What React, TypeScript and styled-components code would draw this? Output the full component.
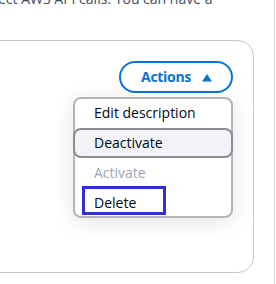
import React from "react";
import styled, { createGlobalStyle } from "styled-components";

const GlobalStyle = createGlobalStyle`
  html, body {
    margin: 0;
    padding: 0;
    background: #ffffff;
    overflow: hidden;
  }
  body {
    font-family: "Open Sans", "Helvetica Neue", Roboto, Arial, sans-serif;
    font-size: 14px;
    line-height: 20px;
    color: #000716;
  }
`;

const Page = styled.div`
  width: 274px;
  height: 284px;
  border-right: 1px solid #d9dce0;
  overflow: hidden;
  position: relative;
`;

const Intro = styled.p`
  margin: -11px 0 0 -2px;
  color: #414d5c;
  white-space: nowrap;
`;

const Card = styled.section`
  box-sizing: border-box;
  margin: 31px 0 0 -24px;
  width: 278px;
  height: 233px;
  border: 1px solid #c6c6cd;
  border-radius: 16px;
  padding: 20px 20px;
`;

const Header = styled.div`
  display: flex;
  justify-content: flex-end;
  position: relative;
`;

const ActionsButton = styled.button`
  display: inline-flex;
  align-items: center;
  gap: 8px;
  box-sizing: border-box;
  height: 32px;
  padding: 4px 16px 4px 20px;
  border: 2px solid #0972d3;
  border-radius: 20px;
  background: #ffffff;
  color: #0972d3;
  font-family: inherit;
  font-size: 14px;
  font-weight: 700;
  line-height: 20px;
  letter-spacing: -0.3px;
`;

const Caret = styled.svg`
  display: block;
  width: 16px;
  height: 16px;
`;

const Menu = styled.ul`
  position: absolute;
  top: 36px;
  right: 0;
  box-sizing: border-box;
  width: 160px;
  height: 121px;
  margin: 0;
  padding: 0;
  list-style: none;
  background: #ffffff;
  border: 2px solid #b4b4bb;
  border-radius: 8px;
  box-shadow: 0 4px 20px 1px rgba(0, 7, 22, 0.1);
`;

const List = styled.div`
  margin-top: -1px;
`;

const Item = styled.li<{ $highlighted?: boolean; $disabled?: boolean }>`
  position: relative;
  box-sizing: border-box;
  height: 30px;
  display: flex;
  align-items: center;
  padding-left: 19px;
  margin: ${(p) => (p.$highlighted ? "0 -2px" : "0")};
  color: ${(p) => (p.$disabled ? "#9ba7b6" : "#000716")};
  background: ${(p) => (p.$highlighted ? "#f3f3f7" : "transparent")};
  border: ${(p) => (p.$highlighted ? "2px solid #8c8c94" : "none")};
  border-radius: 8px;
  white-space: nowrap;
`;

const FocusRing = styled.span`
  position: absolute;
  left: 7px;
  top: -2px;
  box-sizing: border-box;
  width: 84px;
  height: 29px;
  border: 3px solid #2f2fd0;
  pointer-events: none;
`;

const items = [
  { label: "Edit description" },
  { label: "Deactivate", highlighted: true },
  { label: "Activate", disabled: true },
  { label: "Delete", focused: true },
];

const App = () => {
  return (
    <>
      <GlobalStyle />
      <Page>
        <Intro>ect AWS API calls. You can have a</Intro>
        <Card>
          <Header>
            <ActionsButton>
              Actions
              <Caret viewBox="0 0 16 16">
                <path d="M3 12.5 L8 5 L13 12.5 Z" fill="#0972d3" />
              </Caret>
            </ActionsButton>
            <Menu>
              <List>
                {items.map((item) => (
                  <Item
                    key={item.label}
                    $highlighted={item.highlighted}
                    $disabled={item.disabled}
                  >
                    {item.focused && <FocusRing />}
                    {item.label}
                  </Item>
                ))}
              </List>
            </Menu>
          </Header>
        </Card>
      </Page>
    </>
  );
};

export default App;
